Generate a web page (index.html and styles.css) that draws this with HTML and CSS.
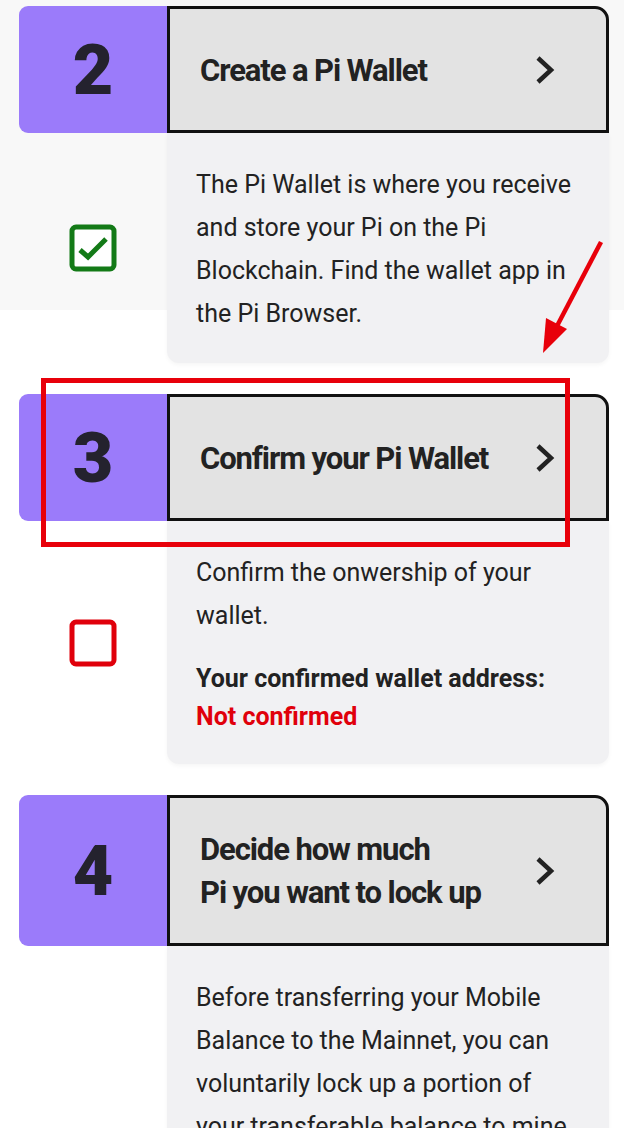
FILE: index.html
```html
<!DOCTYPE html>
<html lang="en">
<head>
  <meta charset="UTF-8">
  <meta name="viewport" content="width=device-width, initial-scale=1.0">
  <title>Pi Mainnet Checklist</title>
  <link rel="stylesheet" href="styles.css">
</head>
<body>
  <div class="steps">
    <section class="step">
      <div class="step-num">2</div>
      <a class="step-title" href="#">
        <span>Create a Pi Wallet</span>
        <svg class="chevron" viewBox="0 0 20 30"><path d="M3 3 L16 15 L3 27"/></svg>
      </a>
      <div class="step-check">
        <svg class="box done" viewBox="0 0 48 48">
          <rect x="3" y="3" width="42" height="42" rx="4"/>
          <path d="M11 26 L19 33 L37 15"/>
        </svg>
      </div>
      <div class="step-body">
        <p>The Pi Wallet is where you receive and store your Pi on the Pi Blockchain. Find the wallet app in the Pi Browser.</p>
      </div>
    </section>

    <section class="step">
      <div class="step-num">3</div>
      <a class="step-title" href="#">
        <span>Confirm your Pi Wallet</span>
        <svg class="chevron" viewBox="0 0 20 30"><path d="M3 3 L16 15 L3 27"/></svg>
      </a>
      <div class="step-check">
        <svg class="box todo" viewBox="0 0 48 48">
          <rect x="3" y="3" width="42" height="42" rx="4"/>
        </svg>
      </div>
      <div class="step-body">
        <p>Confirm the onwership of your wallet.</p>
        <p class="address">Your confirmed wallet address:<br><span class="not-confirmed">Not confirmed</span></p>
      </div>
    </section>

    <section class="step">
      <div class="step-num">4</div>
      <a class="step-title" href="#">
        <span>Decide how much<br>Pi you want to lock up</span>
        <svg class="chevron" viewBox="0 0 20 30"><path d="M3 3 L16 15 L3 27"/></svg>
      </a>
      <div class="step-check">
        <svg class="box done" viewBox="0 0 48 48">
          <rect x="3" y="3" width="42" height="42" rx="4"/>
          <path d="M11 26 L19 33 L37 15"/>
        </svg>
      </div>
      <div class="step-body">
        <p>Before transferring your Mobile Balance to the Mainnet, you can voluntarily lock up a portion of your transferable balance to mine at a higher rate. The lockup period you choose applies to the full amount, and the locked Pi is released back to your Mainnet wallet when the period ends.</p>
      </div>
    </section>
  </div>

  <!-- screenshot annotation -->
  <svg class="annotation" width="624" height="560" viewBox="0 0 624 560">
    <rect x="43.5" y="380.5" width="524" height="164" />
    <line x1="601" y1="242" x2="557" y2="326" />
    <polygon points="543,353 546,318 567,329" />
  </svg>
</body>
</html>
```

FILE: styles.css
```css
* {
  box-sizing: border-box;
}
body {
  margin: 0;
  font-family: Roboto, "Noto Sans", Arial, sans-serif;
  color: #222;
  background: linear-gradient(#f8f8f8 0, #f8f8f8 310px, #fff 310px);
  min-height: 100vh;
  position: relative;
}
.steps {
  padding: 6px 15px 0 19px;
}
.step {
  display: grid;
  grid-template-columns: 148px 1fr;
  margin-bottom: 31px;
}
.step-num {
  background: #9b7bfa;
  border-radius: 9px 0 0 9px;
  display: flex;
  align-items: center;
  justify-content: center;
  font-size: 70px;
  font-weight: 900;
  color: #24222e;
}
.step-title {
  display: flex;
  align-items: center;
  justify-content: space-between;
  min-height: 127px;
  padding: 30px 51px 29px 30px;
  background: #e3e3e3;
  border: 3px solid #111;
  border-radius: 0 14px 0 0;
  color: #222;
  text-decoration: none;
  font-size: 31px;
  font-weight: 700;
  line-height: 43px;
  letter-spacing: -1.1px;
}
.chevron {
  width: 20px;
  height: 30px;
  flex-shrink: 0;
}
.chevron path {
  fill: none;
  stroke: #222;
  stroke-width: 4.5;
}
.step-check {
  display: flex;
  align-items: center;
  justify-content: center;
}
.box {
  width: 48px;
  height: 48px;
}
.box rect {
  fill: #fff;
  stroke-width: 5;
}
.box path {
  fill: none;
  stroke-width: 5;
}
.box.done rect,
.box.done path {
  stroke: #137a17;
}
.box.todo rect {
  stroke: #e0000b;
}
.step-body {
  background: #f1f1f3;
  border-radius: 0 0 12px 12px;
  box-shadow: 0 2px 4px rgba(0, 0, 0, 0.04);
  padding: 30px 29px 28px 29px;
  font-size: 25px;
  line-height: 43px;
}
.step-body p {
  margin: 0;
}
.step-body .address {
  margin-top: 23px;
  font-weight: 700;
  line-height: 38px;
}
.not-confirmed {
  color: #e0000b;
}
.annotation {
  position: absolute;
  top: 0;
  left: 0;
  pointer-events: none;
}
.annotation rect {
  fill: none;
  stroke: #e8000a;
  stroke-width: 5;
}
.annotation line {
  stroke: #e8000a;
  stroke-width: 4.5;
}
.annotation polygon {
  fill: #e8000a;
}
```
